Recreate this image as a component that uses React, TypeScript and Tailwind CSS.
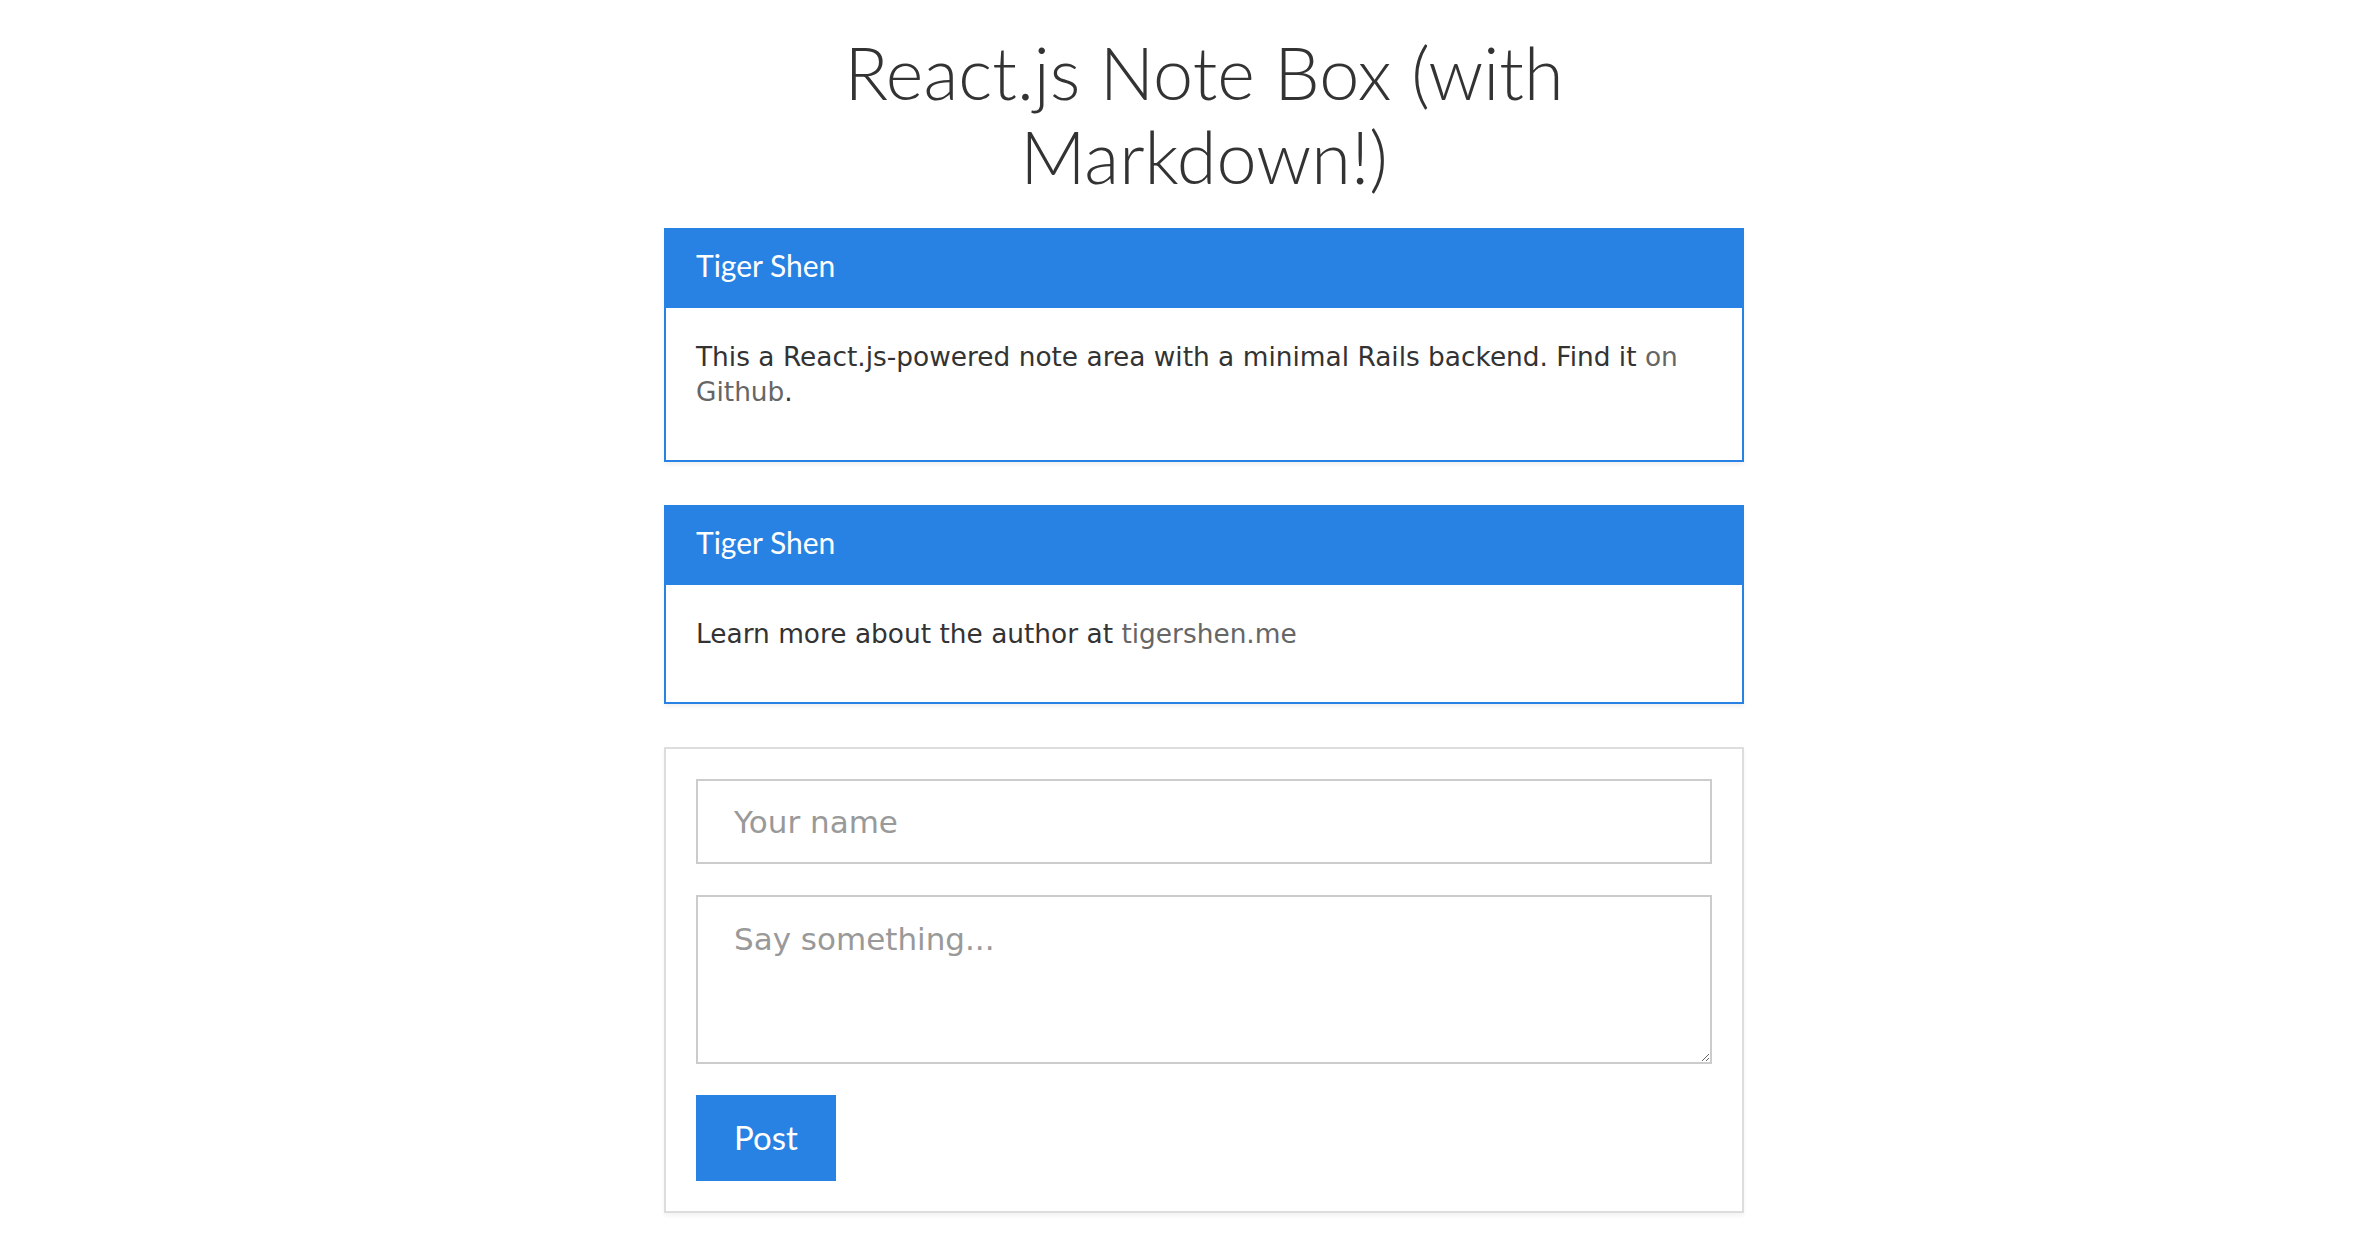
import React from "react";

const calibri = { fontFamily: "Lato, 'Open Sans', sans-serif" };
const verdana = { fontFamily: "'DejaVu Sans', Verdana, sans-serif" };

function NoteCard({ author, children }: { author: string; children: React.ReactNode }) {
  return (
    <div className="border-2 border-[#2882e3] bg-white shadow-[0_3px_4px_rgba(0,0,0,0.06)]">
      <div className="h-[78px] bg-[#2882e3] px-[30px] flex items-center pb-[7px]">
        <span className="text-white text-[30px]" style={calibri}>{author}</span>
      </div>
      <div className="px-[30px] pt-[31px] pb-[51px] text-[26.4px] leading-[35px] text-[#333]" style={verdana}>
        {children}
      </div>
    </div>
  );
}

export default function App() {
  return (
    <div className="min-h-[1256px] bg-white pl-[50px]">
      <div className="mx-auto w-[1080px]">
        <h1
          className="pt-[30px] pb-[30px] text-center text-[72px] leading-[84px] font-light text-[#333]"
          style={calibri}
        >
          React.js Note Box (with
          <br />
          Markdown!)
        </h1>
        <div className="flex flex-col gap-[43px]">
          <NoteCard author="Tiger Shen">
            This a React.js-powered note area with a minimal Rails backend. Find it{" "}
            <a className="text-[#666]">on</a> <a className="text-[#666]">Github</a>.
          </NoteCard>
          <NoteCard author="Tiger Shen">
            Learn more about the author at <a className="text-[#666]">tigershen.me</a>
          </NoteCard>
          <form className="border-2 border-[#ddd] p-[30px] flex flex-col gap-[31px] shadow-[0_3px_4px_rgba(0,0,0,0.05)]">
            <input
              className="h-[85px] w-full border-2 border-[#ccc] px-[36px] text-[31px] text-[#333] placeholder:text-[#999] outline-none"
              style={verdana}
              placeholder="Your name"
            />
            <textarea
              className="h-[169px] w-full border-2 border-[#ccc] px-[36px] pt-[22px] text-[31px] leading-[40px] text-[#333] placeholder:text-[#999] outline-none block"
              style={verdana}
              placeholder="Say something..."
            />
            <div>
              <button
                type="button"
                className="h-[86px] w-[140px] bg-[#2882e3] text-white text-[33px]"
                style={calibri}
              >
                Post
              </button>
            </div>
          </form>
        </div>
      </div>
    </div>
  );
}
